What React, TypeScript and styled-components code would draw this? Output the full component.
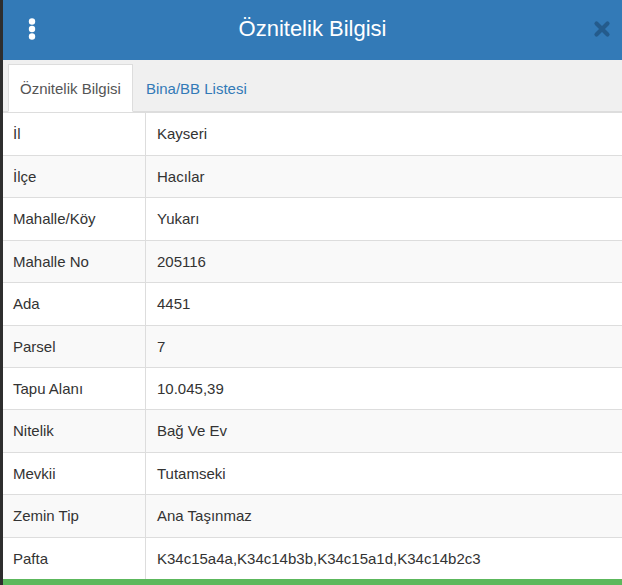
import React, { useState } from "react";
import styled, { createGlobalStyle } from "styled-components";

const Global = createGlobalStyle`
  html, body { margin: 0; padding: 0; }
  body {
    background: #2e2e2e;
    font-family: "Liberation Sans", Arial, sans-serif;
    overflow: hidden;
  }
`;

const Panel = styled.div`
  margin-left: 3px;
  height: 585px;
  background: #fff;
  display: flex;
  flex-direction: column;
  overflow: hidden;
`;

const Header = styled.div`
  height: 60px;
  flex: none;
  background: #337ab7;
  display: flex;
  align-items: center;
  justify-content: space-between;
  padding: 0 10px 2px 22px;
  box-sizing: border-box;
  position: relative;
`;

const Title = styled.h1`
  position: absolute;
  left: 0;
  right: 0;
  top: 0;
  bottom: 2px;
  margin: 0;
  display: flex;
  align-items: center;
  justify-content: center;
  color: #fff;
  font-size: 22px;
  font-weight: normal;
  pointer-events: none;
`;

const IconButton = styled.button<{ $wide?: boolean }>`
  background: none;
  border: 0;
  padding: 0;
  display: flex;
  align-items: center;
  justify-content: center;
  width: ${(p) => (p.$wide ? "20px" : "14px")};
  height: 24px;
  cursor: pointer;
  position: relative;
  z-index: 1;
`;

const TabBar = styled.div`
  flex: none;
  background: #f0f0f0;
  border-bottom: 1px solid #ddd;
  padding: 4px 0 0 5px;
  display: flex;
`;

const Tab = styled.button<{ $active?: boolean }>`
  font-family: inherit;
  font-size: 15px;
  line-height: 21.4px;
  padding: 13px 11px 12px;
  margin: 0 1px -1px 0;
  border: 1px solid ${(p) => (p.$active ? "#ddd" : "transparent")};
  border-bottom-color: ${(p) => (p.$active ? "#fff" : "transparent")};
  background: ${(p) => (p.$active ? "#fff" : "transparent")};
  color: ${(p) => (p.$active ? "#555" : "#337ab7")};
  cursor: pointer;
`;

const Table = styled.table`
  width: 100%;
  border-collapse: collapse;
  font-size: 15px;
  line-height: 21.43px;
  color: #333;
`;

const Row = styled.tr<{ $striped?: boolean }>`
  background: ${(p) => (p.$striped ? "#f9f9f9" : "#fff")};
`;

const Label = styled.td`
  width: 122px;
  padding: 10px;
  border-top: 1px solid #ddd;
  border-right: 1px solid #ddd;
  vertical-align: top;
`;

const Value = styled.td`
  padding: 10px 10px 10px 11px;
  border-top: 1px solid #ddd;
  vertical-align: top;
`;

const Spacer = styled.div`
  flex: 1;
`;

const Footer = styled.div`
  flex: none;
  height: 6px;
  background: #5cb85c;
`;

const rows: [string, string][] = [
  ["İl", "Kayseri"],
  ["İlçe", "Hacılar"],
  ["Mahalle/Köy", "Yukarı"],
  ["Mahalle No", "205116"],
  ["Ada", "4451"],
  ["Parsel", "7"],
  ["Tapu Alanı", "10.045,39"],
  ["Nitelik", "Bağ Ve Ev"],
  ["Mevkii", "Tutamseki"],
  ["Zemin Tip", "Ana Taşınmaz"],
  ["Pafta", "K34c15a4a,K34c14b3b,K34c15a1d,K34c14b2c3"],
];

export default function App() {
  const [tab, setTab] = useState(0);
  return (
    <>
      <Global />
      <Panel>
        <Header>
          <IconButton aria-label="menu">
            <svg width="8" height="24" viewBox="0 0 8 24">
              <circle cx="4" cy="4.5" r="3.2" fill="#fff" />
              <circle cx="4" cy="12" r="3.2" fill="#fff" />
              <circle cx="4" cy="19.5" r="3.2" fill="#fff" />
            </svg>
          </IconButton>
          <Title>Öznitelik Bilgisi</Title>
          <IconButton aria-label="close" $wide>
            <svg width="18" height="18" viewBox="0 0 18 18">
              <path
                d="M3.5 3.5 L14.5 14.5 M14.5 3.5 L3.5 14.5"
                stroke="#245b8c"
                strokeWidth="4.2"
                strokeLinecap="round"
              />
            </svg>
          </IconButton>
        </Header>
        <TabBar>
          <Tab $active={tab === 0} onClick={() => setTab(0)}>
            Öznitelik Bilgisi
          </Tab>
          <Tab $active={tab === 1} onClick={() => setTab(1)}>
            Bina/BB Listesi
          </Tab>
        </TabBar>
        <Table>
          <tbody>
            {rows.map(([k, v], i) => (
              <Row key={k} $striped={i % 2 === 1}>
                <Label>{k}</Label>
                <Value>{v}</Value>
              </Row>
            ))}
          </tbody>
        </Table>
        <Spacer />
        <Footer />
      </Panel>
    </>
  );
}
